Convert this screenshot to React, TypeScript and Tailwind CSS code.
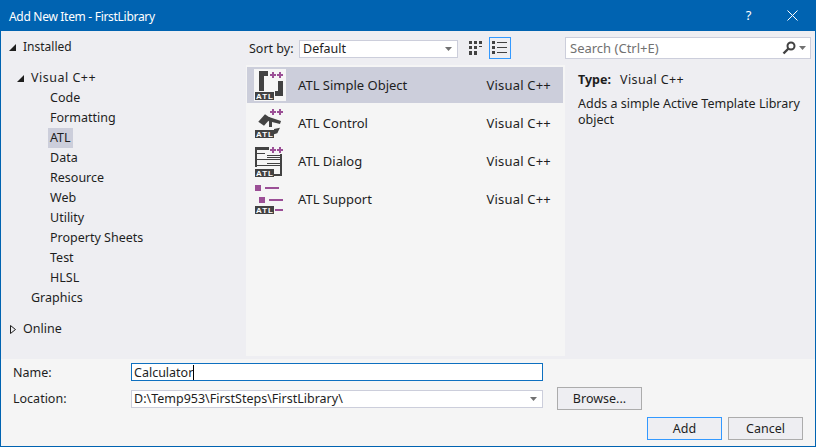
import React from 'react';

const FONT = "font-['Noto_Sans','Open_Sans',sans-serif]";

const AtlTag = ({ x, y }: { x: number; y: number }) => (
  <g>
    <rect x={x} y={y} width="19" height="8" fill="#424242" />
    <text x={x + 10} y={y + 7} textAnchor="middle" fontSize="8" fontWeight="700" letterSpacing="1" fill="#fff" fontFamily="Liberation Sans">
      ATL
    </text>
  </g>
);

const Plus = ({ x, y }: { x: number; y: number }) => (
  <path d={`M${x} ${y}h2v2h2v2h-2v2h-2v-2h-2v-2h2z`} fill="#9b4f96" />
);

const Plusses = ({ y = 2 }: { y?: number }) => (
  <>
    <Plus x={18} y={y} />
    <Plus x={25} y={y} />
  </>
);

const SimpleObjectIcon = () => (
  <svg width="32" height="32" viewBox="0 0 32 32">
    <rect x="0" y="0" width="32" height="32" fill="#f6f6f6" />
    <path d="M5 2h9v5h-4v15H5z" fill="#424242" />
    <path d="M24 12h5v15H20v-5h4z" fill="#424242" />
    <Plusses y={3} />
    <rect x="0" y="22" width="21" height="10" fill="#f6f6f6" />
    <AtlTag x={1} y={23} />
  </svg>
);

const ControlIcon = () => (
  <svg width="32" height="32" viewBox="0 0 32 32">
    <Plusses />
    <path d="M4.3 14.7L11 7.3l5.7 4L10 18.7z" fill="#424242" />
    <path d="M15 10l12 4-1 3-12-3z" fill="#424242" />
    <path d="M15 14h3v6h-3z" fill="#424242" />
    <path d="M20 22l6-1.3-2.7 5.6-3.3 1z" fill="#424242" />
    <AtlTag x={1} y={23} />
  </svg>
);

const DialogIcon = () => (
  <svg width="32" height="32" viewBox="0 0 32 32">
    <path d="M1 2h14v3H3v17H1z" fill="#424242" />
    <Plusses />
    <path d="M3 8h8v1H3zM13 10h13v1H13zM13 12h13v1H13zM3 14h23v1H3zM13 18h13v1H13zM3 20h23v1H3z" fill="#424242" />
    <path d="M26 9h2v22h-9v-2h7z" fill="#424242" />
    <AtlTag x={1} y={24} />
  </svg>
);

const SupportIcon = () => (
  <svg width="32" height="32" viewBox="0 0 32 32">
    <rect x="1" y="2" width="6" height="6" fill="#9b4f96" />
    <rect x="11" y="4" width="14" height="2" fill="#9b4f96" />
    <rect x="5" y="14" width="6" height="6" fill="#9b4f96" />
    <rect x="15" y="16" width="14" height="2" fill="#9b4f96" />
    <AtlTag x={1} y={23} />
    <rect x="21" y="26" width="8" height="2" fill="#9b4f96" />
  </svg>
);

const GridIcon = () => (
  <svg width="14" height="14" viewBox="0 0 14 14" fill="#424242">
    <path d="M0 0h3v3H0zM5 0h3v3H5zM10 0h3v3h-3zM0 5h3v3H0zM5 5h3v3H5zM10 5h3v1h-3zM0 10h3v3H0zM5 10h3v3H5zM0 13h3v1H0zM5 13h3v1H5z" />
  </svg>
);

const ListIcon = () => (
  <svg width="16" height="14" viewBox="0 0 16 14" fill="#424242">
    <path d="M0 0h3v3H0zM5 1h10v1H5zM0 5h3v3H0zM5 6h10v1H5zM0 10h3v3H0zM5 11h10v1H5z" />
  </svg>
);

const SearchIcon = () => (
  <svg width="14" height="14" viewBox="0 0 14 14" fill="none" stroke="#424242">
    <circle cx="9" cy="5" r="3.5" strokeWidth="2" />
    <path d="M6.5 7.5L1.5 12.5" strokeWidth="2.4" />
  </svg>
);

const Caret = () => (
  <svg width="7" height="4" viewBox="0 0 7 4" fill="#717171">
    <path d="M0 0h7L3.5 4z" />
  </svg>
);

const Expanded = () => (
  <svg width="7" height="7" viewBox="0 0 7 7" fill="#1e1e1e">
    <path d="M7 0v7H0z" />
  </svg>
);

const Collapsed = () => (
  <svg width="6" height="9" viewBox="0 0 6 9" fill="none" stroke="#1e1e1e">
    <path d="M.5.5v8l5-4z" />
  </svg>
);

const categories = ['Code', 'Formatting', 'ATL', 'Data', 'Resource', 'Web', 'Utility', 'Property Sheets', 'Test', 'HLSL'];

const items = [
  { name: 'ATL Simple Object', icon: <SimpleObjectIcon />, selected: true },
  { name: 'ATL Control', icon: <ControlIcon />, selected: false },
  { name: 'ATL Dialog', icon: <DialogIcon />, selected: false },
  { name: 'ATL Support', icon: <SupportIcon />, selected: false },
];

const Tree = () => (
  <div className="w-[245px] shrink-0 text-[12.5px] text-[#1e1e1e]">
    <div className="mt-[6px] flex h-[20px] items-center pl-[8px]">
      <Expanded />
      <span className="ml-[7px] text-[12px]">Installed</span>
    </div>
    <div className="mt-[11px] flex h-[20px] items-center pl-[16px]">
      <Expanded />
      <span className="ml-[7px] tracking-[0.5px]">Visual C++</span>
    </div>
    {categories.map((c) => (
      <div key={c} className="flex h-[20px] items-center pl-[47px]">
        <span className={c === 'ATL' ? 'flex h-[20px] items-center bg-[#cccedb] px-[2px]' : 'px-[2px]'}>{c}</span>
      </div>
    ))}
    <div className="flex h-[20px] items-center pl-[30px]">Graphics</div>
    <div className="mt-[11px] flex h-[20px] items-center pl-[9px]">
      <Collapsed />
      <span className="ml-[7px]">Online</span>
    </div>
  </div>
);

const Middle = () => (
  <div className="flex w-[319px] shrink-0 flex-col">
    <div className="flex h-[34px] items-center text-[12.5px] text-[#1e1e1e]">
      <span className="ml-[3px] mt-[2px] w-[50px]">Sort by:</span>
      <div className="mt-[2px] flex h-[18px] w-[159px] items-center justify-between border border-[#cccedb] bg-white pl-[3px] pr-[5px]">
        <span>Default</span>
        <Caret />
      </div>
      <div className="ml-[11px] flex w-[14px] justify-center">
        <GridIcon />
      </div>
      <div className="ml-[6px] flex h-[22px] w-[22px] items-center justify-center border border-[#3399ff]">
        <ListIcon />
      </div>
    </div>
    <div className="flex h-[291px] flex-col gap-[2px] bg-[#f5f5f5] pl-[1px] pr-[2px] pt-[2px] text-[13px] text-[#1e1e1e]">
      {items.map((item) => (
        <div key={item.name} className={`flex h-[36px] items-center ${item.selected ? 'bg-[#cccedb]' : ''}`}>
          <div className="ml-[7px] flex w-[32px]">{item.icon}</div>
          <span className="ml-[12px] mt-[1px] flex-1">{item.name}</span>
          <span className="mr-[12px] mt-[1px] tracking-[0.2px]">Visual C++</span>
        </div>
      ))}
    </div>
  </div>
);

const Details = () => (
  <div className="flex-1 pr-[4px] pt-[6px]">
    <div className="flex h-[22px] w-[246px] items-center justify-between border border-[#cccedb] bg-white pl-[4px] pr-[4px] text-[13px] text-[#717171]">
      <span className="pt-[2px]">Search (Ctrl+E)</span>
      <span className="flex items-center gap-[3px]">
        <SearchIcon />
        <Caret />
      </span>
    </div>
    <div className="ml-[13px] mt-[12px] text-[12.5px] text-[#1e1e1e]">
      <div className="leading-[18px]">
        <span className="font-bold">Type:</span>
        <span className="ml-[9px] tracking-[0.4px]">Visual C++</span>
      </div>
      <p className="mt-[7px] w-[225px] leading-[16px]">Adds a simple Active Template Library object</p>
    </div>
  </div>
);

const Button = ({ label, wide, focus }: { label: string; wide?: boolean; focus?: boolean }) => (
  <div
    className={`flex h-[23px] items-center justify-center border bg-[#eeeef2] pt-[2px] text-[12.5px] text-[#1e1e1e] ${wide ? 'w-[85px]' : 'w-[75px]'} ${focus ? 'border-[#3399ff]' : 'border-[#acacac]'}`}
  >
    {label}
  </div>
);

export default function App() {
  return (
    <div className={`flex h-[447px] w-[816px] flex-col overflow-hidden border border-t-0 border-[#0063b1] bg-[#eeeef2] ${FONT}`}>
      <div className="-mx-px flex h-[31px] shrink-0 items-center justify-between bg-[#0063b1] pl-[9px] pr-[18px] text-[12px] tracking-[-0.3px] text-white">
        <span className="pt-[2px]">Add New Item - FirstLibrary</span>
        <div className="flex items-center gap-[36px]">
          <span className="text-[13px]">?</span>
          <svg width="11" height="11" viewBox="0 0 11 11" stroke="#fff" fill="none">
            <path d="M.5.5l10 10M10.5.5l-10 10" />
          </svg>
        </div>
      </div>
      <div className="flex min-h-0 flex-1">
        <Tree />
        <Middle />
        <Details />
      </div>
      <div className="flex h-[87px] shrink-0 flex-col bg-[#f5f5f5] pt-[4px] text-[12.5px] text-[#1e1e1e]">
        <div className="flex h-[18px] items-center">
          <span className="ml-[12px] w-[118px] pt-[2px]">Name:</span>
          <div className="flex h-[18px] w-[412px] items-center border border-[#0e70c0] bg-white pl-[2px]">
            <span className="pt-[2px]">Calculator</span>
            <span className="h-[15px] w-px bg-black" />
          </div>
        </div>
        <div className="mt-[6px] flex h-[23px] items-center">
          <span className="ml-[12px] w-[118px] pt-[2px]">Location:</span>
          <div className="flex h-[18px] w-[412px] items-center justify-between border border-[#cccedb] bg-white pl-[2px] pr-[5px]">
            <span className="pt-[2px]">D:\Temp953\FirstSteps\FirstLibrary\</span>
            <Caret />
          </div>
          <div className="ml-[14px]">
            <Button label="Browse..." wide />
          </div>
        </div>
        <div className="mt-[7px] flex justify-end gap-[6px] pr-[12px]">
          <Button label="Add" focus />
          <Button label="Cancel" />
        </div>
      </div>
    </div>
  );
}
